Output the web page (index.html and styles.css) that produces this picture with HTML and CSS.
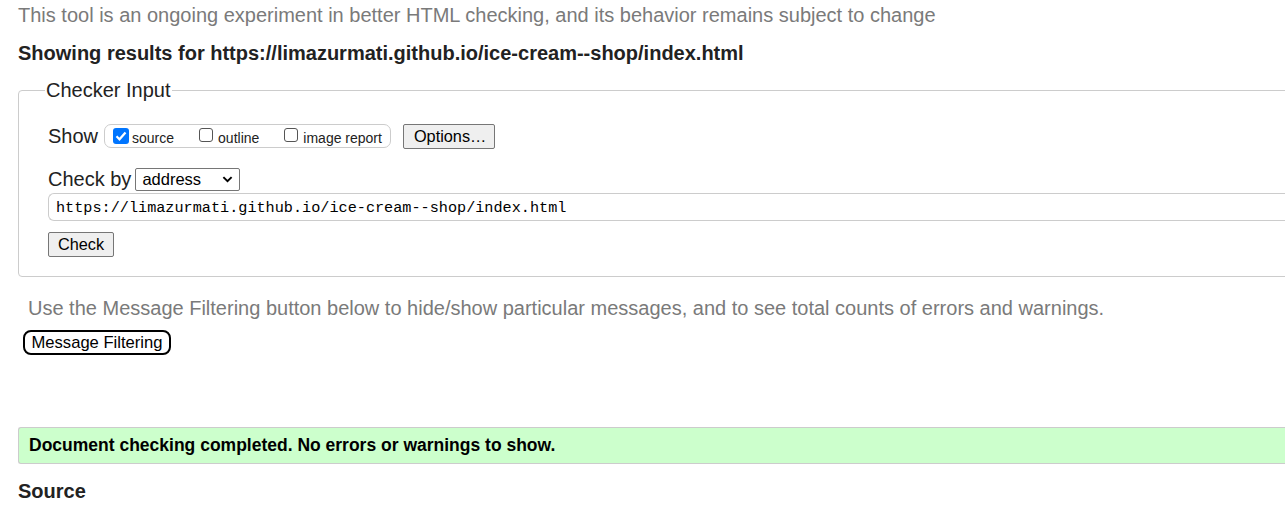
FILE: index.html
```html
<!DOCTYPE html>
<html lang="en">
<head>
<meta charset="utf-8">
<title>Nu Html Checker</title>
<link rel="stylesheet" href="styles.css">
</head>
<body>
<div class="page">
  <p class="intro">This tool is an ongoing experiment in better HTML checking, and its behavior remains subject to change</p>
  <p class="showing">Showing results for https://limazurmati.github.io/ice-cream--shop/index.html</p>
  <fieldset class="checker">
    <legend class="legend">Checker Input</legend>
    <div class="row show-row">
      <span class="label">Show</span>
      <span class="opts">
        <label class="opt"><span class="cb checked"><svg viewBox="0 0 16 16" width="16" height="16"><rect x="0" y="0" width="16" height="16" rx="3" fill="#0075ff"/><path d="M3.5 8.3 L6.5 11.3 L12.5 4.5" fill="none" stroke="#fff" stroke-width="2.2"/></svg></span>source</label>
        <label class="opt"><span class="cb"></span>outline</label>
        <label class="opt"><span class="cb"></span>image report</label>
      </span>
      <button class="btn options">Options…</button>
    </div>
    <div class="row by-row">
      <span class="label">Check by</span>
      <span class="select">address<svg class="chev" viewBox="0 0 12 8" width="11" height="7"><path d="M1.3 1.3 L6 6 L10.7 1.3" fill="none" stroke="#000" stroke-width="2.2"/></svg></span>
    </div>
    <div class="url">https://limazurmati.github.io/ice-cream--shop/index.html</div>
    <button class="btn check">Check</button>
  </fieldset>
  <p class="filter-note">Use the Message Filtering button below to hide/show particular messages, and to see total counts of errors and warnings.</p>
  <button class="filter-btn">Message Filtering</button>
  <div class="success">Document checking completed. No errors or warnings to show.</div>
  <h2 class="source">Source</h2>
</div>
</body>
</html>
```
FILE: styles.css
```css
html {
  overflow: hidden;
}
body {
  margin: 0;
  background: #fff;
  font-family: "Liberation Sans", Arial, sans-serif;
  color: #222;
}
.page {
  width: 1420px;
  padding: 0 0 0 18px;
}
.intro {
  margin: 0;
  padding-top: 4px;
  font-size: 20px;
  line-height: 23px;
  color: #7a7a7a;
}
.showing {
  margin: 15px 0 0;
  font-size: 20px;
  line-height: 23px;
  font-weight: bold;
  color: #222;
}
.checker {
  margin: 14px 0 0;
  padding: 21px 0 19px 29px;
  border: 1px solid #ccc;
  border-radius: 4px;
  min-width: 0;
}
.legend {
  padding: 0 1px;
  margin-left: -3px;
  font-size: 20px;
  line-height: 23px;
  color: #222;
}
.row {
  display: flex;
  align-items: center;
}
.label {
  font-size: 20px;
  color: #222;
}
.show-row {
  height: 26px;
}
.opts {
  display: inline-flex;
  align-items: center;
  box-sizing: border-box;
  height: 24px;
  margin-left: 6px;
  padding: 0 8px;
  border: 1px solid #ccc;
  border-radius: 7px;
  gap: 25px;
}
.opt {
  display: inline-flex;
  align-items: center;
  font-size: 14px;
  color: #222;
  padding-top: 4px;
}
.cb {
  width: 14px;
  height: 14px;
  border: 1px solid #555;
  border-radius: 3px;
  margin: -7px 5px 0 0;
  box-sizing: border-box;
  display: inline-block;
  background: #fff;
}
.cb.checked {
  border: none;
  width: 16px;
  height: 16px;
  margin: -5px 3px 0 0;
}
.cb svg { display: block; }
.btn {
  font-family: "Liberation Sans", Arial, sans-serif;
  font-size: 16.3px;
  color: #000;
  background: #efefef;
  border: 1px solid #767676;
  border-radius: 2px;
  height: 25px;
  padding: 0 10px;
}
.options {
  margin-left: 12px;
  width: 92px;
}
.by-row {
  margin-top: 18px;
  height: 24px;
}
.select {
  display: inline-flex;
  align-items: center;
  justify-content: space-between;
  box-sizing: border-box;
  width: 105px;
  height: 23px;
  margin-left: 4px;
  padding: 0 6px 0 6px;
  border: 1px solid #767676;
  border-radius: 2px;
  font-size: 16.5px;
  color: #000;
}
.url {
  margin-top: 2px;
  box-sizing: border-box;
  height: 28px;
  padding: 5px 0 0 7px;
  border: 1px solid #ccc;
  border-right: none;
  border-radius: 6px 0 0 6px;
  font-family: "Liberation Mono", "DejaVu Sans Mono", monospace;
  font-size: 15.2px;
  color: #000;
}
.check {
  margin-top: 11px;
  width: 66px;
  padding: 0;
}
.filter-note {
  margin: 20px 0 0 10px;
  font-size: 20px;
  line-height: 23px;
  color: #7a7a7a;
}
.filter-btn {
  display: block;
  margin: 10px 0 0 5px;
  height: 25px;
  width: 148px;
  padding: 0;
  border: 2px solid #000;
  border-radius: 8px;
  background: #fff;
  font-family: "Liberation Sans", Arial, sans-serif;
  font-size: 16.6px;
  color: #000;
}
.success {
  margin-top: 72px;
  box-sizing: border-box;
  height: 37px;
  padding: 0 0 0 10px;
  line-height: 35px;
  background: #ccffcc;
  border: 1px solid #ccc;
  border-right: none;
  border-radius: 3px 0 0 3px;
  font-size: 17.5px;
  font-weight: bold;
  color: #000;
}
.source {
  margin: 16px 0 0;
  font-size: 20px;
  line-height: 23px;
  font-weight: bold;
  color: #222;
}
```
